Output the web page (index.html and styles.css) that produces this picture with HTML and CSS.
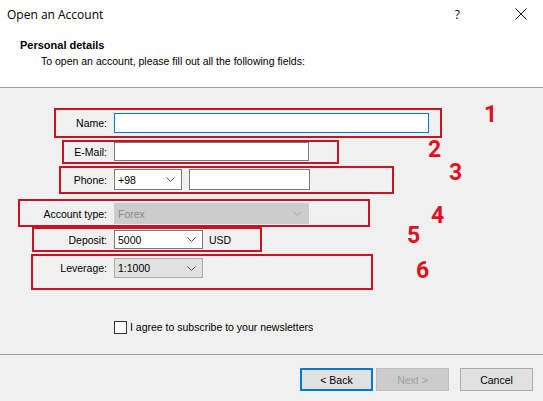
FILE: index.html
```html
<!DOCTYPE html>
<html>
<head>
<meta charset="utf-8">
<link rel="stylesheet" href="styles.css">
</head>
<body>
<div class="dialog">
  <div class="titlebar">
    <span class="title">Open an Account</span>
    <span class="help">?</span>
    <svg class="close" width="12" height="12" viewBox="0 0 12 12"><path d="M0.5 0.5 L11.5 11.5 M11.5 0.5 L0.5 11.5" stroke="#111" stroke-width="1" fill="none"/></svg>
  </div>
  <div class="header">
    <div class="h-title">Personal details</div>
    <div class="h-sub">To open an account, please fill out all the following fields:</div>
  </div>
  <div class="content">
    <div class="form">
      <div class="row r-name">
        <label class="lbl">Name:</label>
        <div class="field input focused w-name"></div>
      </div>
      <div class="row r-email">
        <label class="lbl">E-Mail:</label>
        <div class="field input w-email"></div>
      </div>
      <div class="row r-phone">
        <label class="lbl">Phone:</label>
        <div class="field combo w-code"><span class="val">+98</span><svg class="chev" width="9" height="5" viewBox="0 0 9 5"><path d="M0.5 0.5 L4.5 4.5 L8.5 0.5" stroke="#555" fill="none"/></svg></div>
        <div class="field input w-phone"></div>
      </div>
      <div class="row r-acct">
        <label class="lbl">Account type:</label>
        <div class="field combo disabled w-acct"><span class="val">Forex</span><svg class="chev" width="9" height="5" viewBox="0 0 9 5"><path d="M0.5 0.5 L4.5 4.5 L8.5 0.5" stroke="#a8a8a8" fill="none"/></svg></div>
      </div>
      <div class="row r-dep">
        <label class="lbl">Deposit:</label>
        <div class="field combo w-dep"><span class="val">5000</span><svg class="chev" width="9" height="5" viewBox="0 0 9 5"><path d="M0.5 0.5 L4.5 4.5 L8.5 0.5" stroke="#555" fill="none"/></svg></div>
        <span class="unit">USD</span>
      </div>
      <div class="row r-lev">
        <label class="lbl">Leverage:</label>
        <div class="field combo list w-lev"><span class="val">1:1000</span><svg class="chev" width="9" height="5" viewBox="0 0 9 5"><path d="M0.5 0.5 L4.5 4.5 L8.5 0.5" stroke="#555" fill="none"/></svg></div>
      </div>
      <div class="row r-check">
        <span class="checkbox"></span>
        <span class="check-text">I agree to subscribe to your newsletters</span>
      </div>
    </div>

    <div class="mark m1"></div>
    <div class="mark m2"></div>
    <div class="mark m3"></div>
    <div class="mark m4"></div>
    <div class="mark m5"></div>
    <div class="mark m6"></div>
    <span class="num n1">1</span>
    <span class="num n2">2</span>
    <span class="num n3">3</span>
    <span class="num n4">4</span>
    <span class="num n5">5</span>
    <span class="num n6">6</span>
  </div>
  <div class="footer">
    <button class="btn default">&lt; Back</button>
    <button class="btn disabled">Next &gt;</button>
    <button class="btn cancel">Cancel</button>
  </div>
</div>
</body>
</html>
```

FILE: styles.css
```css
* { box-sizing: border-box; }
html, body { margin: 0; padding: 0; }
body {
  width: 543px;
  height: 401px;
  overflow: hidden;
  background: #f0f0f0;
  font-family: "Liberation Sans", Arial, sans-serif;
  font-size: 10.5px;
  color: #000;
}
.dialog { width: 543px; height: 401px; display: flex; flex-direction: column; }

.titlebar {
  height: 30px;
  background: #fff;
  display: flex;
  align-items: center;
  padding-left: 7px;
  flex: none;
}
.title { font-family: "Open Sans", "Noto Sans", sans-serif; font-size: 12px; flex: 1; padding-bottom: 2px; }
.help { font-family: "Open Sans", sans-serif; font-size: 12px; margin-right: 55px; padding-bottom: 2px; }
.close { margin-right: 16px; margin-bottom: 2px; }

.header {
  height: 58px;
  background: #fff;
  border-bottom: 1px solid #a0a0a0;
  padding: 9px 0 0 20px;
  flex: none;
}
.h-title { font-weight: bold; font-size: 11px; line-height: 13px; }
.h-sub { padding-left: 21px; line-height: 13px; margin-top: 3px; }

.content { position: relative; height: 266px; flex: none; }
.form { display: flex; flex-direction: column; padding-top: 25px; }
.row { display: flex; align-items: center; }
.lbl { width: 108px; text-align: right; padding-right: 1px; margin-right: 6px; }
.r-name { height: 20px; }
.r-email { height: 19px; margin-top: 9px; }
.r-phone { height: 21px; margin-top: 8px; }
.r-acct { height: 21px; margin-top: 13px; }
.r-dep { height: 19px; margin-top: 6px; }
.r-lev { height: 20px; margin-top: 9px; }
.r-check { margin-top: 42px; padding-left: 114px; height: 14px; }

.field { height: 100%; background: #fff; border: 1px solid #7a7a7a; }
.input.focused { border-color: #0078d7; }
.combo { display: flex; align-items: center; padding-left: 3px; }
.combo .val { flex: 1; }
.combo .chev { margin-right: 6px; }
.combo.disabled { background: #cccccc; border-color: #cccccc; color: #8a8a8a; }
.combo.list { background: #e1e1e1; border-color: #adadad; }
.w-name { width: 315px; }
.w-email { width: 195px; }
.w-code { width: 68px; }
.w-phone { width: 121px; margin-left: 7px; }
.w-acct { width: 195px; }
.w-dep { width: 89px; }
.w-lev { width: 89px; }
.unit { margin-left: 6px; }

.checkbox { width: 13px; height: 13px; border: 1px solid #333; background: #fff; margin-right: 3px; }
.check-text { line-height: 13px; }

.mark { position: absolute; border: 2px solid #cc1220; }
.m1 { left: 54px; top: 20px; width: 388px; height: 30px; }
.m2 { left: 62px; top: 52px; width: 277px; height: 24px; }
.m3 { left: 59px; top: 78px; width: 335px; height: 28px; }
.m4 { left: 18px; top: 111px; width: 352px; height: 28px; }
.m5 { left: 32px; top: 139px; width: 230px; height: 25px; }
.m6 { left: 31px; top: 166px; width: 342px; height: 36px; }

.num {
  position: absolute;
  font-family: Roboto, "Liberation Sans", sans-serif;
  font-weight: bold;
  font-size: 23px;
  line-height: 23px;
  color: #e0101e;
}
.n1 { left: 484px; top: 15px; }
.n2 { left: 428px; top: 50px; }
.n3 { left: 449px; top: 73px; }
.n4 { left: 431px; top: 116px; }
.n5 { left: 407px; top: 136px; }
.n6 { left: 416px; top: 171px; }

.footer {
  flex: 1;
  border-top: 1px solid #a0a0a0;
  display: flex;
  align-items: flex-start;
  padding: 13px 0 0 300px;
}
.btn {
  width: 73px;
  height: 23px;
  font-family: "Liberation Sans", Arial, sans-serif;
  font-size: 10.5px;
  background: #e1e1e1;
  border: 1px solid #adadad;
  color: #000;
  padding: 0;
}
.btn.default { border: 2px solid #0078d7; }
.btn.disabled { background: #cccccc; border-color: #bfbfbf; color: #a0a0a0; margin-left: 3px; }
.btn.cancel { margin-left: 11px; }
```
